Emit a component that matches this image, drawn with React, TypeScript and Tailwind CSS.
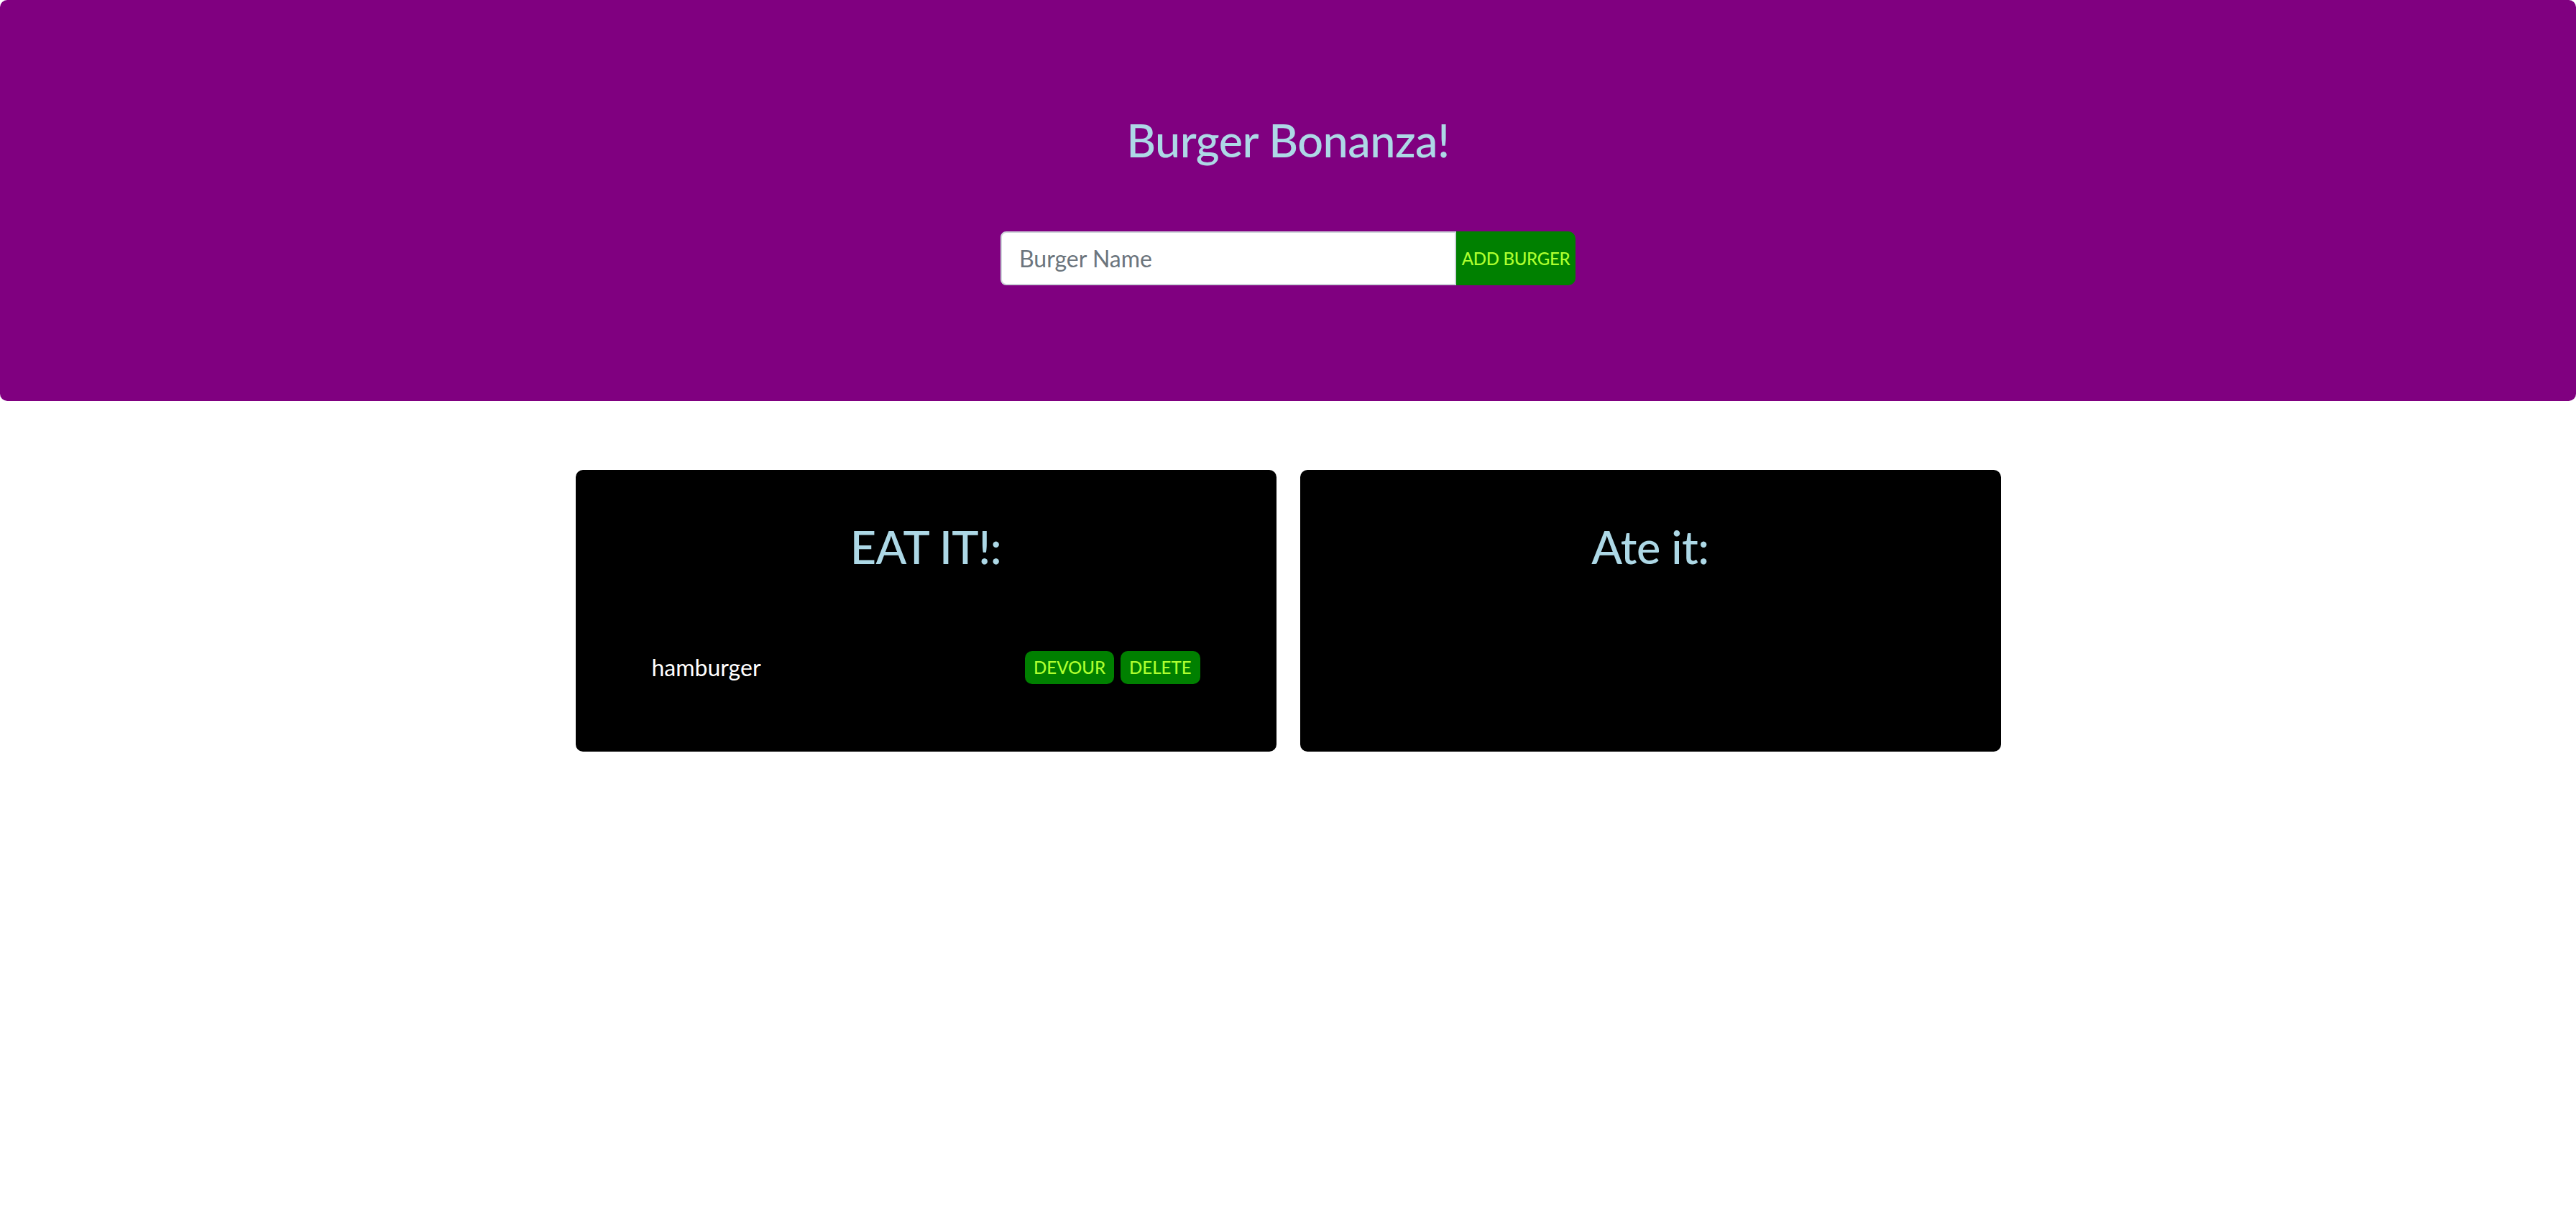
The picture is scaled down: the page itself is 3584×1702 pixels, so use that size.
import React from 'react';

const font = { fontFamily: 'Lato, "Noto Sans", sans-serif' };

const burgers = [{ id: 1, name: 'hamburger', devoured: false }];

export default function App() {
  return (
    <div className="min-h-screen bg-white" style={font}>
      {/* Jumbotron */}
      <header className="h-[558px] bg-[#800080] rounded-[10px] flex flex-col items-center pt-[156px]">
        <h1 className="text-[63px] leading-[77px] font-medium tracking-[-0.5px] text-[#add8e6]">Burger Bonanza!</h1>
        <form className="mt-[89px] flex w-[800px] h-[75px]" onSubmit={(e) => e.preventDefault()}>
          <input
            type="text"
            placeholder="Burger Name"
            className="flex-1 min-w-0 h-full bg-white border-2 border-[#ced4da] rounded-l-[8px] px-[24px] text-[32px] text-[#495057] placeholder:text-[#6c757d] outline-none"
          />
          <button
            type="submit"
            className="w-[166px] h-full bg-[#008000] text-[#adff2f] text-[24px] font-medium tracking-[-0.3px] whitespace-nowrap rounded-r-[10px]"
          >
            ADD BURGER
          </button>
        </form>
      </header>

      {/* Burger lists */}
      <main className="mt-[96px] flex justify-center">
        <div className="grid grid-cols-2 gap-[33px] w-[1983px]">
          <section className="bg-black rounded-[10px] h-[392px] pt-[68px] px-[106px]">
            <h2 className="text-center text-[63px] leading-[77px] font-medium tracking-[-0.5px] text-[#add8e6]">EAT IT!:</h2>
            <ul className="mt-[107px]">
              {burgers
                .filter((b) => !b.devoured)
                .map((b) => (
                  <li key={b.id} className="flex items-center justify-between h-[46px]">
                    <span className="text-[32px] text-white">{b.name}</span>
                    <div className="flex gap-[9px]">
                      <button className="h-[46px] px-[12px] rounded-[10px] bg-[#008000] text-[#adff2f] text-[24px] font-medium whitespace-nowrap">
                        DEVOUR
                      </button>
                      <button className="h-[46px] px-[12px] rounded-[10px] bg-[#008000] text-[#adff2f] text-[24px] font-medium whitespace-nowrap">
                        DELETE
                      </button>
                    </div>
                  </li>
                ))}
            </ul>
          </section>
          <section className="bg-black rounded-[10px] h-[392px] pt-[68px] px-[106px]">
            <h2 className="text-center text-[63px] leading-[77px] font-medium tracking-[-0.5px] text-[#add8e6]">Ate it:</h2>
          </section>
        </div>
      </main>
    </div>
  );
}
